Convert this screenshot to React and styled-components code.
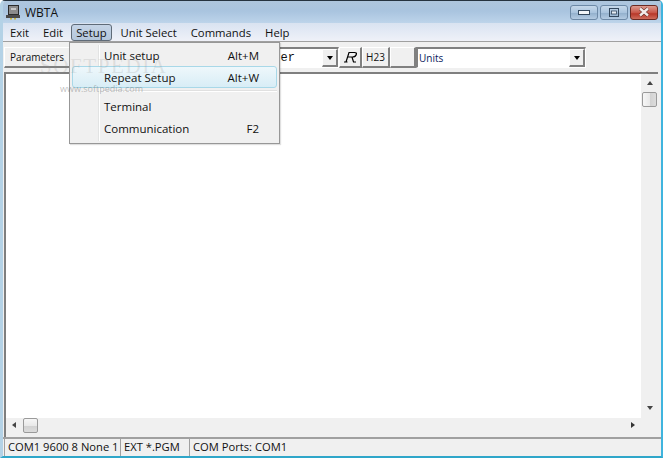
import React from "react";
import styled, { createGlobalStyle } from "styled-components";

const GlobalStyle = createGlobalStyle`
  html, body { margin: 0; padding: 0; background: #fff; }
  body { font-family: "Open Sans", "Noto Sans", sans-serif; overflow: hidden; }
`;

const Window = styled.div`
  position: relative;
  width: 663px;
  height: 458px;
  box-sizing: border-box;
  display: flex;
  flex-direction: column;
  overflow: hidden;
  background: #f0f0f0;
  border-top: 1px solid #26333f;
  border-left: 3px solid #b4d2e6;
  border-right: 2px solid #3fb4de;
  border-bottom: 2px solid #2fa6c9;
  border-radius: 5px 5px 0 0;
`;

const TitleBar = styled.div`
  height: 22px;
  flex: none;
  display: flex;
  align-items: center;
  padding: 0 3px 0 2px;
  gap: 4px;
  background: linear-gradient(180deg, #aec6dd 0%, #a9c4df 45%, #bdd4ea 100%);
`;

const TitleText = styled.span`
  font-size: 12px;
  color: #111;
`;

const WinButtons = styled.div`
  margin-left: auto;
  display: flex;
  gap: 2px;
`;

const WinButton = styled.div`
  width: 28px;
  height: 15px;
  box-sizing: border-box;
  border: 1px solid ${(p) => (p.$close ? "#6b2a22" : "#6d89a6")};
  border-radius: 3px;
  display: flex;
  align-items: center;
  justify-content: center;
  background: ${(p) =>
    p.$close
      ? "linear-gradient(180deg, #dd9c90 0%, #c9584a 50%, #b8382a 60%, #cf6c5b 100%)"
      : "linear-gradient(180deg, #c6d8e9 0%, #aac4de 50%, #93b0cd 55%, #b4cbe2 100%)"};
`;

const MenuBar = styled.div`
  height: 19px;
  flex: none;
  display: flex;
  align-items: center;
  border-bottom: 1px solid #a0a0a0;
  box-sizing: border-box;
  background: linear-gradient(180deg, #d9e3f1 0%, #e4eaf5 50%, #eff1f8 100%);
`;

const MenuItem = styled.div`
  height: 17px;
  line-height: 15px;
  box-sizing: border-box;
  padding: 0 ${(p) => (p.$open ? 4 : 6)}px;
  margin: 0 ${(p) => (p.$open ? "2px 0 1px" : "0")};
  font-size: 11.3px;
  color: #111;
  border-radius: 3px;
  border: 1px solid ${(p) => (p.$open ? "#5f6b78" : "transparent")};
  background: ${(p) => (p.$open ? "linear-gradient(180deg, #c5d4e6, #b4c7dc)" : "none")};
`;

const ToolBar = styled.div`
  height: 30px;
  flex: none;
  box-sizing: border-box;
  display: flex;
  align-items: flex-start;
  padding: 5px 0 0 1px;
  background: #f0f0f0;
`;

const ToolButton = styled.div`
  width: ${(p) => p.$w}px;
  height: 21px;
  box-sizing: border-box;
  display: flex;
  align-items: center;
  justify-content: ${(p) => (p.$left ? "flex-start" : "center")};
  padding-left: ${(p) => (p.$left ? "5px" : "0")};
  font-size: 10px;
  color: #111;
  background: #f0f0f0;
  border-top: 1px solid #fff;
  border-left: 1px solid #fff;
  border-right: 2px solid #808080;
  border-bottom: 2px solid #808080;
`;

const ComboBox = styled.div`
  width: ${(p) => p.$w}px;
  height: 21px;
  box-sizing: border-box;
  display: flex;
  align-items: center;
  background: #fff;
  border-top: 2px solid #808080;
  border-left: 2px solid #808080;
  border-right: 1px solid #fff;
  border-bottom: 1px solid #fff;
  font-size: 10px;
  color: ${(p) => p.$color || "#111"};
`;

const ComboValue = styled.span`
  flex: 1;
  font-family: ${(p) => (p.$mono ? '"Liberation Mono", monospace' : "inherit")};
  font-size: ${(p) => (p.$mono ? "12px" : "10px")};
  text-align: ${(p) => (p.$mono ? "right" : "left")};
  padding-right: ${(p) => (p.$mono ? "27px" : "0")};
  padding-left: ${(p) => (p.$mono ? "0" : "1px")};
  margin-top: -1px;
`;

const ComboArrow = styled.div`
  width: 16px;
  height: 18px;
  flex: none;
  box-sizing: border-box;
  display: flex;
  align-items: center;
  justify-content: center;
  background: #f0f0f0;
  border-top: 1px solid #fff;
  border-left: 1px solid #fff;
  border-right: 2px solid #808080;
  border-bottom: 2px solid #808080;
`;

const ArrowDown = styled.div`
  width: 0;
  height: 0;
  border-left: 3.5px solid transparent;
  border-right: 3.5px solid transparent;
  border-top: 4px solid #000;
`;

const ContentRow = styled.div`
  flex: 1;
  min-height: 0;
  display: flex;
  flex-direction: column;
  margin: 0 3px 0 1px;
  border-top: 2px solid #7f7f7f;
  border-left: 2px solid #7f7f7f;
`;

const EditRow = styled.div`
  flex: 1;
  min-height: 0;
  display: flex;
`;

const EditArea = styled.div`
  flex: 1;
  background: #fff;
`;

const VScroll = styled.div`
  width: 17px;
  flex: none;
  display: flex;
  flex-direction: column;
  align-items: center;
  background: #f0f0f0;
  padding-top: 7px;
  box-sizing: border-box;
`;

const HScrollRow = styled.div`
  height: 19px;
  flex: none;
  display: flex;
  align-items: flex-start;
  background: #f0f0f0;
`;

const ScrollThumb = styled.div`
  box-sizing: border-box;
  width: 15px;
  height: 15px;
  border: 1px solid #9a9a9a;
  border-radius: 2px;
  background: linear-gradient(${(p) => (p.$vert ? "90deg" : "180deg")}, #f6f6f6 0%, #e9e9e9 50%, #d2d2d2 55%, #dcdcdc 100%);
`;

const TriUp = styled.div`
  width: 0;
  height: 0;
  border-left: 3.5px solid transparent;
  border-right: 3.5px solid transparent;
  border-bottom: 4px solid #444;
  margin-bottom: 7px;
`;

const TriDown = styled(TriUp)`
  border-bottom: none;
  border-top: 4px solid #444;
  margin-top: auto;
  margin-bottom: 8px;
`;

const TriLeft = styled.div`
  width: 0;
  height: 0;
  border-top: 3.5px solid transparent;
  border-bottom: 3.5px solid transparent;
  border-right: 4px solid #444;
  margin: 4px 7px 0 6px;
`;

const TriRight = styled.div`
  width: 0;
  height: 0;
  border-top: 3.5px solid transparent;
  border-bottom: 3.5px solid transparent;
  border-left: 4px solid #333;
  margin: 4px 23px 0 auto;
`;

const StatusBar = styled.div`
  height: 19px;
  flex: none;
  display: flex;
  align-items: stretch;
  gap: 1px;
  padding: 0 2px 0 1px;
  box-sizing: border-box;
  border-top: 2px solid #a0a0a0;
  background: #f0f0f0;
`;

const StatusCell = styled.div`
  width: ${(p) => p.$w}px;
  flex: ${(p) => (p.$w ? "none" : 1)};
  box-sizing: border-box;
  font-size: 11.2px;
  line-height: 16px;
  padding-left: 3px;
  color: #111;
  white-space: nowrap;
  overflow: hidden;
  border-left: 1px solid #a0a0a0;
`;

const Dropdown = styled.div`
  position: absolute;
  left: 66px;
  top: 41px;
  width: 211px;
  height: 102px;
  box-sizing: border-box;
  background: #f0f0f0;
  border: 1px solid #979797;
  box-shadow: 1px 1px 1px rgba(0, 0, 0, 0.12);
  padding: 1px 2px 2px;
  display: flex;
  flex-direction: column;
`;

const GutterLine = styled.div`
  position: absolute;
  left: 28px;
  top: 2px;
  bottom: 2px;
  width: 2px;
  background: linear-gradient(90deg, #e2e3e3 50%, #fff 50%);
`;

const DropItem = styled.div`
  position: relative;
  height: 22px;
  flex: none;
  box-sizing: border-box;
  display: flex;
  align-items: center;
  padding: 0 17px 0 31px;
  font-size: 11.5px;
  color: #111;
  border-radius: 3px;
  border: 1px solid ${(p) => (p.$active ? "#a8d8e8" : "transparent")};
  background: ${(p) => (p.$active ? "linear-gradient(180deg, #eef7fb, #d8edf6)" : "none")};
`;

const Shortcut = styled.span`
  margin-left: auto;
`;

const DropSep = styled.div`
  height: 2px;
  margin: 2px 0 3px 31px;
  background: linear-gradient(180deg, #e0e0e0 50%, #fff 50%);
  flex: none;
`;

const Watermark = styled.div`
  position: absolute;
  left: 37px;
  top: 53px;
  font-family: "Liberation Serif", serif;
  font-size: 21px;
  letter-spacing: 1.6px;
  color: rgba(140, 140, 140, 0.2);
  pointer-events: none;
`;

const WatermarkUrl = styled.div`
  position: absolute;
  left: 57px;
  top: 81px;
  font-size: 9px;
  color: rgba(110, 110, 110, 0.45);
  pointer-events: none;
`;

const AppIcon = () => (
  <svg width="16" height="16" viewBox="0 0 16 16">
    <rect x="3" y="1" width="11" height="10" fill="#2b2b2b" />
    <rect x="4" y="2" width="9" height="8" fill="#8c8c8c" />
    <rect x="6" y="4" width="5" height="2" fill="#c9c9c9" />
    <rect x="1" y="11" width="14" height="3" fill="#4b4b4b" />
    <rect x="5" y="14" width="2" height="1.5" fill="#c8b23a" />
    <rect x="9" y="14" width="2" height="1.5" fill="#c8b23a" />
  </svg>
);

const MinGlyph = () => (
  <svg width="12" height="6" viewBox="0 0 12 6">
    <rect x="0.5" y="1.5" width="11" height="4" fill="#f2f5f8" stroke="#33475c" />
  </svg>
);

const MaxGlyph = () => (
  <svg width="10" height="9" viewBox="0 0 10 9">
    <rect x="0.5" y="0.5" width="9" height="8" fill="none" stroke="#33475c" />
    <rect x="2.5" y="3" width="5" height="3" fill="#e8eef5" stroke="#33475c" strokeWidth="0.8" />
  </svg>
);

const CloseGlyph = () => (
  <svg width="14" height="10" viewBox="0 0 14 10">
    <path d="M3 1.5 L11 8.5 M11 1.5 L3 8.5" stroke="#4a2018" strokeWidth="3.6" />
    <path d="M3 1.5 L11 8.5 M11 1.5 L3 8.5" stroke="#f4ecea" strokeWidth="2.4" />
  </svg>
);

const ItalicR = () => (
  <svg width="15" height="12" viewBox="0 0 15 12">
    <path
      d="M3 11 L6 1.5 H11.5 Q14 1.5 13.3 3.5 Q12.5 6 9.5 6 H4.6 M9 6 L10.5 11 H13 M1 11 H4.5"
      fill="none"
      stroke="#000"
      strokeWidth="1.2"
    />
  </svg>
);

export default function App() {
  return (
    <>
      <GlobalStyle />
      <Window>
        <TitleBar>
          <AppIcon />
          <TitleText>WBTA</TitleText>
          <WinButtons>
            <WinButton><MinGlyph /></WinButton>
            <WinButton><MaxGlyph /></WinButton>
            <WinButton $close><CloseGlyph /></WinButton>
          </WinButtons>
        </TitleBar>
        <MenuBar>
          <MenuItem>Exit</MenuItem>
          <MenuItem>Edit</MenuItem>
          <MenuItem $open>Setup</MenuItem>
          <MenuItem>Unit Select</MenuItem>
          <MenuItem>Commands</MenuItem>
          <MenuItem>Help</MenuItem>
        </MenuBar>
        <ToolBar>
          <ToolButton $w={68} $left>Parameters</ToolButton>
          <ComboBox $w={267}>
            <ComboValue $mono>er</ComboValue>
            <ComboArrow><ArrowDown /></ComboArrow>
          </ComboBox>
          <ToolButton $w={23}><ItalicR /></ToolButton>
          <ToolButton $w={28}>H23</ToolButton>
          <ToolButton $w={26} />
          <ComboBox $w={170} $color="#0a1a5c">
            <ComboValue>Units</ComboValue>
            <ComboArrow><ArrowDown /></ComboArrow>
          </ComboBox>
        </ToolBar>
        <ContentRow>
          <EditRow>
            <EditArea />
            <VScroll>
              <TriUp />
              <ScrollThumb $vert />
              <TriDown />
            </VScroll>
          </EditRow>
          <HScrollRow>
            <TriLeft />
            <ScrollThumb />
            <TriRight />
          </HScrollRow>
        </ContentRow>
        <StatusBar>
          <StatusCell $w={115}>COM1 9600 8 None 1</StatusCell>
          <StatusCell $w={68}>EXT *.PGM</StatusCell>
          <StatusCell>COM Ports: COM1</StatusCell>
        </StatusBar>
        <Dropdown>
          <GutterLine />
          <DropItem>Unit setup<Shortcut>Alt+M</Shortcut></DropItem>
          <DropItem $active>Repeat Setup<Shortcut>Alt+W</Shortcut></DropItem>
          <DropSep />
          <DropItem>Terminal</DropItem>
          <DropItem>Communication<Shortcut>F2</Shortcut></DropItem>
        </Dropdown>
        <Watermark>SOFTPEDIA</Watermark>
        <WatermarkUrl>www.softpedia.com</WatermarkUrl>
      </Window>
    </>
  );
}
